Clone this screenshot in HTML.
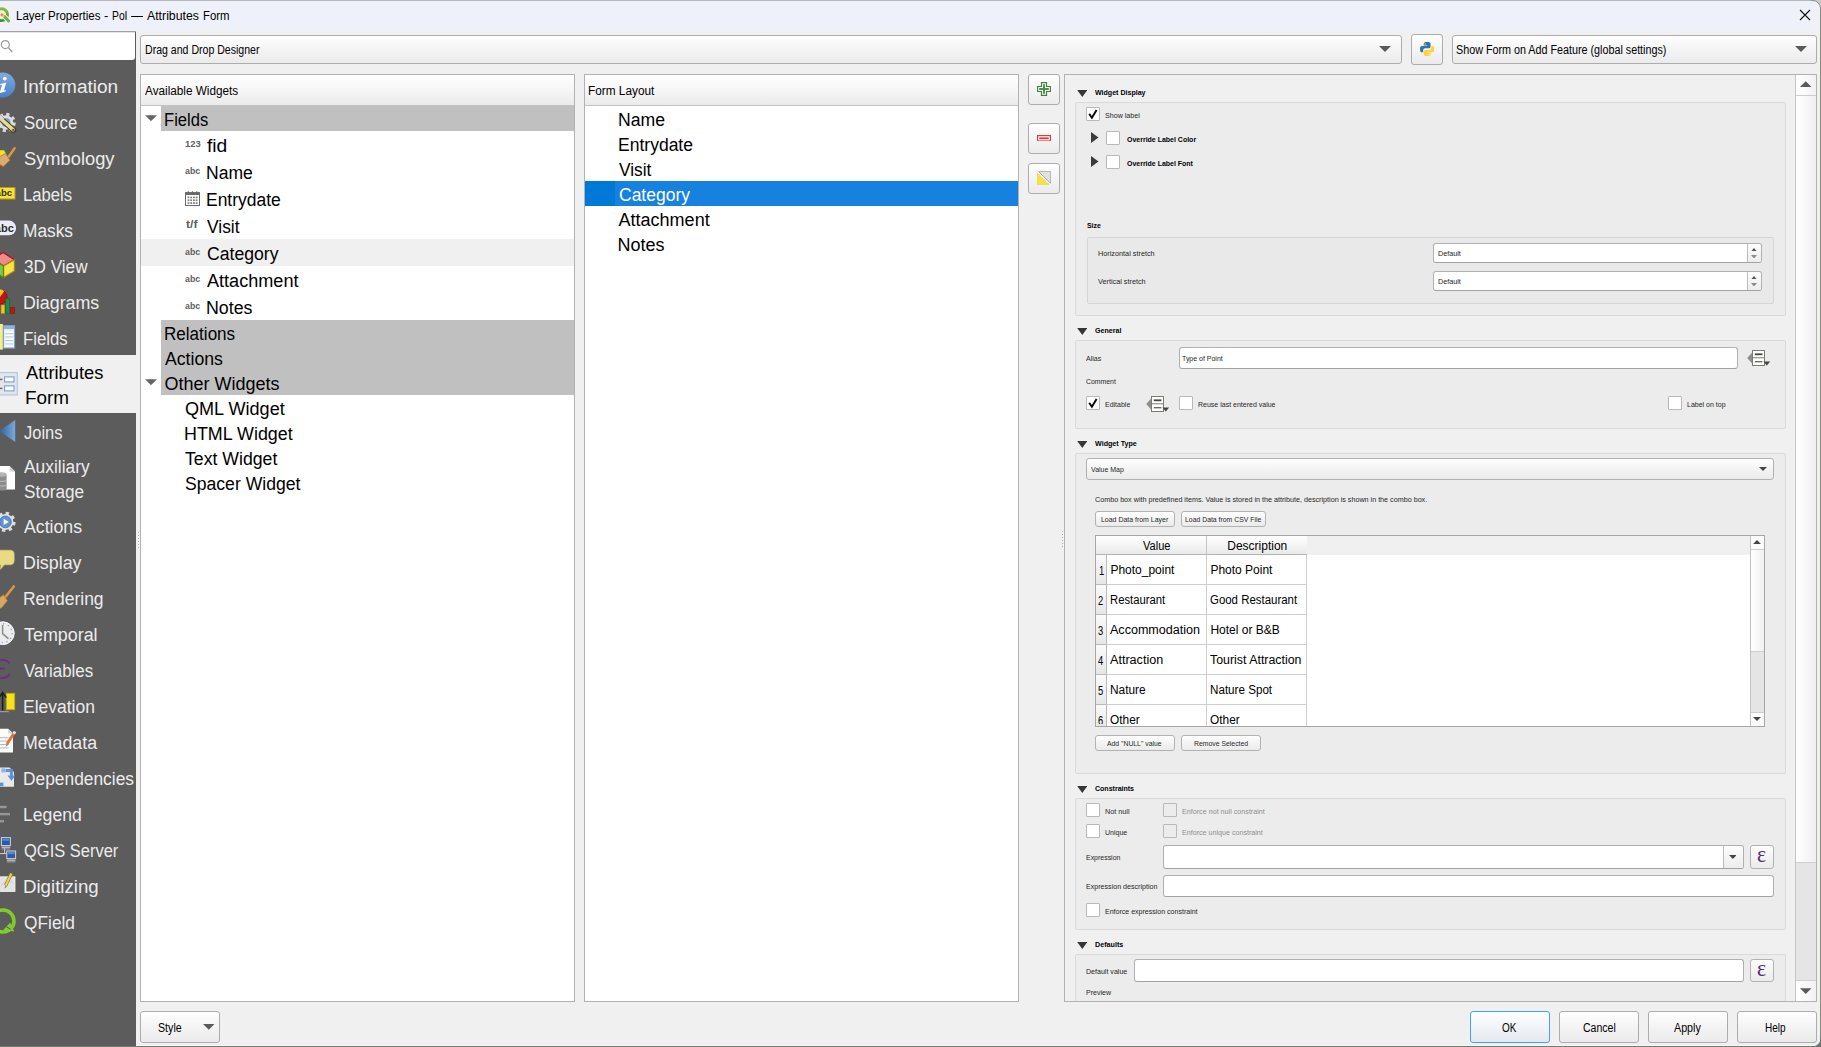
<!DOCTYPE html>
<html><head><meta charset="utf-8"><title>Layer Properties</title>
<style>
html,body{margin:0;padding:0}
body{width:1821px;height:1047px;overflow:hidden;position:relative;background:#f0f0f0;font-family:"Liberation Sans", sans-serif;font-size:12px}
div,span,svg{position:absolute;box-sizing:border-box}
span{white-space:pre}

</style></head>
<body>
<div style="left:0px;top:0px;width:1821px;height:31px;background:#eef1f9"></div>
<div style="left:0px;top:0px;width:1821px;height:1px;background:#b4b6bd"></div>
<span style="left:15.60px;top:9px;font-size:12px;line-height:14px;color:#000;transform:scaleX(0.9586);transform-origin:0 0;">Layer Properties</span>
<span style="left:103.80px;top:9px;font-size:12px;line-height:14px;color:#000;transform:scaleX(1.0750);transform-origin:0 0;">-</span>
<span style="left:111.90px;top:9px;font-size:12px;line-height:14px;color:#000;transform:scaleX(0.8598);transform-origin:0 0;">PoI</span>
<span style="left:131.15px;top:9px;font-size:12px;line-height:14px;color:#000;transform:scaleX(0.9958);transform-origin:0 0;">—</span>
<span style="left:146.80px;top:9px;font-size:12px;line-height:14px;color:#000;transform:scaleX(1.0249);transform-origin:0 0;">Attributes</span>
<span style="left:202.50px;top:9px;font-size:12px;line-height:14px;color:#000;transform:scaleX(0.9464);transform-origin:0 0;">Form</span>
<svg style="left:1799px;top:9px" width="12" height="12" viewBox="0 0 12 12"><path d="M1 1 L11 11 M11 1 L1 11" stroke="#111" stroke-width="1.1" fill="none"/></svg>
<svg style="left:0;top:5px" width="12" height="20" viewBox="0 5 12 20"><defs><linearGradient id="gq" x1="0" y1="0" x2="0" y2="1"><stop offset="0" stop-color="#8bbd2c"/><stop offset="1" stop-color="#3f962c"/></linearGradient></defs><circle cx="1.6" cy="14.7" r="5.9" fill="none" stroke="url(#gq)" stroke-width="2.9"/><path d="M4.6 16.6 L8.8 21.2" stroke="#eef1f9" stroke-width="5"/><path d="M4.4 16.4 L8.6 21" stroke="#6fb038" stroke-width="2.9" stroke-linecap="round"/><circle cx="2" cy="14.8" r="1.6" fill="#f28a1e"/><circle cx="3.6" cy="16" r="1.1" fill="#e8d45a"/></svg>
<div style="left:0px;top:31px;width:136px;height:1014px;background:#5c5c5c"></div>
<div style="left:0px;top:31px;width:135px;height:29px;background:#fff;border-bottom-right-radius:3px"></div>
<div style="left:0px;top:31px;width:136px;height:1px;background:#a2a2a2"></div>
<div style="left:0px;top:32px;width:135px;height:1px;background:#e4e4e4"></div>
<svg style="left:0;top:39px" width="14" height="14" viewBox="0 0 14 14"><circle cx="5.3" cy="5.6" r="4" fill="none" stroke="#9a9a9a" stroke-width="1.2"/><path d="M8.2 8.6 L12.3 13" stroke="#9a9a9a" stroke-width="1.4"/></svg>
<span style="left:22.54px;top:77px;font-size:18px;line-height:20px;color:#ececec;transform:scaleX(1.0564);transform-origin:0 0;">Information</span>
<span style="left:23.60px;top:113px;font-size:18px;line-height:20px;color:#ececec;transform:scaleX(0.9339);transform-origin:0 0;">Source</span>
<span style="left:23.60px;top:149px;font-size:18px;line-height:20px;color:#ececec;transform:scaleX(1.0164);transform-origin:0 0;">Symbology</span>
<span style="left:22.67px;top:185px;font-size:18px;line-height:20px;color:#ececec;transform:scaleX(0.9271);transform-origin:0 0;">Labels</span>
<span style="left:22.64px;top:221px;font-size:18px;line-height:20px;color:#ececec;transform:scaleX(0.9607);transform-origin:0 0;">Masks</span>
<span style="left:23.60px;top:257px;font-size:18px;line-height:20px;color:#ececec;transform:scaleX(0.9527);transform-origin:0 0;">3D View</span>
<span style="left:22.61px;top:293px;font-size:18px;line-height:20px;color:#ececec;transform:scaleX(0.9899);transform-origin:0 0;">Diagrams</span>
<span style="left:22.67px;top:329px;font-size:18px;line-height:20px;color:#ececec;transform:scaleX(0.9316);transform-origin:0 0;">Fields</span>
<span style="left:23.60px;top:423px;font-size:18px;line-height:20px;color:#ececec;transform:scaleX(0.9162);transform-origin:0 0;">Joins</span>
<span style="left:23.60px;top:517px;font-size:18px;line-height:20px;color:#ececec;transform:scaleX(0.9826);transform-origin:0 0;">Actions</span>
<span style="left:22.61px;top:553px;font-size:18px;line-height:20px;color:#ececec;transform:scaleX(0.9911);transform-origin:0 0;">Display</span>
<span style="left:22.63px;top:589px;font-size:18px;line-height:20px;color:#ececec;transform:scaleX(0.9698);transform-origin:0 0;">Rendering</span>
<span style="left:23.60px;top:625px;font-size:18px;line-height:20px;color:#ececec;transform:scaleX(0.9941);transform-origin:0 0;">Temporal</span>
<span style="left:23.60px;top:661px;font-size:18px;line-height:20px;color:#ececec;transform:scaleX(0.9389);transform-origin:0 0;">Variables</span>
<span style="left:22.63px;top:697px;font-size:18px;line-height:20px;color:#ececec;transform:scaleX(0.9717);transform-origin:0 0;">Elevation</span>
<span style="left:22.61px;top:733px;font-size:18px;line-height:20px;color:#ececec;transform:scaleX(0.9862);transform-origin:0 0;">Metadata</span>
<span style="left:22.64px;top:769px;font-size:18px;line-height:20px;color:#ececec;transform:scaleX(0.9642);transform-origin:0 0;">Dependencies</span>
<span style="left:22.62px;top:805px;font-size:18px;line-height:20px;color:#ececec;transform:scaleX(0.9784);transform-origin:0 0;">Legend</span>
<span style="left:23.60px;top:841px;font-size:18px;line-height:20px;color:#ececec;transform:scaleX(0.9153);transform-origin:0 0;">QGIS Server</span>
<span style="left:22.56px;top:877px;font-size:18px;line-height:20px;color:#ececec;transform:scaleX(1.0364);transform-origin:0 0;">Digitizing</span>
<span style="left:23.60px;top:913px;font-size:18px;line-height:20px;color:#ececec;transform:scaleX(0.9614);transform-origin:0 0;">QField</span>
<div style="left:0px;top:355px;width:136px;height:58px;background:#f0f0f0"></div>
<span style="left:26.15px;top:363px;font-size:18px;line-height:20px;color:#000;transform:scaleX(1.0180);transform-origin:0 0;">Attributes</span>
<span style="left:25.10px;top:388px;font-size:18px;line-height:20px;color:#000;transform:scaleX(1.0500);transform-origin:0 0;">Form</span>
<span style="left:23.60px;top:457px;font-size:18px;line-height:20px;color:#ececec;transform:scaleX(0.9644);transform-origin:0 0;">Auxiliary</span>
<span style="left:23.60px;top:482px;font-size:18px;line-height:20px;color:#ececec;transform:scaleX(0.9519);transform-origin:0 0;">Storage</span>
<svg style="left:0;top:60px;overflow:hidden" width="24" height="985" viewBox="0 60 24 985"><defs><linearGradient id="gi" x1="0" y1="0" x2="0" y2="1"><stop offset="0" stop-color="#7fabe2"/><stop offset="1" stop-color="#4c80c6"/></linearGradient><linearGradient id="gj" x1="0" y1="0" x2="1" y2="0"><stop offset="0" stop-color="#2f639c"/><stop offset="1" stop-color="#7aa8da"/></linearGradient></defs><circle cx="2.8" cy="85" r="12.5" fill="url(#gi)"/><circle cx="4.8" cy="78.6" r="1.9" fill="#fff"/><path d="M0.4 83.9 L6.3 82.6 L3.9 90.6 L5.9 90.2 L5.6 91.6 L-0.5 93 L2.1 85 L0.2 85.3 Z" fill="#fff"/><circle cx="6" cy="122.5" r="8.2" fill="none" stroke="#d9d9d9" stroke-width="3" stroke-dasharray="3.2 3.24"/><circle cx="6" cy="122.5" r="7.2" fill="#dedede"/><circle cx="6" cy="122.5" r="4.6" fill="#6f9fd8"/><path d="M0 118 L13.4 130" stroke="#3b3a2c" stroke-width="5.6" stroke-linecap="round"/><path d="M0 118 L13 129.7" stroke="#eedc7c" stroke-width="3.6" stroke-linecap="round"/><circle cx="13.2" cy="129.9" r="1.1" fill="#55513a"/><path d="M-1 115.5 L3.5 119.5" stroke="#d8d8d8" stroke-width="3"/><path d="M-1 150.3 L4 150.3 L6 153.6 L-1 157.5 Z" fill="#f6e21e"/><path d="M-1 163 L2.4 166 L-1 167.4 Z" fill="#e02424"/><path d="M14.6 148.2 L8 157.6" stroke="#dd9a3a" stroke-width="2.5" stroke-linecap="round"/><path d="M-2 157.6 L5.6 153.4 L10 160.2 L3.2 166.6 L-2 163.4 Z" fill="#d9ab72" stroke="#a8783a" stroke-width="0.8"/><rect x="-6" y="187.5" width="21" height="11.5" fill="#f7e03c" stroke="#b79b10" stroke-width="1"/><text x="-4.4" y="196.3" font-family="Liberation Sans" font-weight="700" font-size="9.6" fill="#3a3310">abc</text><rect x="-8" y="220.6" width="24" height="14.6" rx="7" fill="#ececf6"/><text x="-5.2" y="232.3" font-family="Liberation Sans" font-weight="700" font-size="11" fill="#2c2c2c">abc</text><path d="M3 252.4 L14.4 259.8 L3.5 266 L-7 259.4 Z" fill="#f08a8a" stroke="#a51414" stroke-width="1.2" stroke-linejoin="round"/><path d="M3.5 266 L14.4 259.8 L14.4 271 L3.5 277.6 Z" fill="#f7e346" stroke="#a08c0a" stroke-width="1.2" stroke-linejoin="round"/><path d="M-7 259.4 L3.5 266 L3.5 277.6 L-7 271 Z" fill="#86c644" stroke="#4a8a1a" stroke-width="1.2" stroke-linejoin="round"/><circle cx="0" cy="297" r="7.2" fill="#c31414" stroke="#8a0c0c" stroke-width="0.8"/><path d="M0 297 L-7 293 A7.2 7.2 0 0 1 4.2 291.2 Z" fill="#f8c622"/><rect x="1.1" y="305" width="3.6" height="8.4" fill="#f8c622" stroke="#c08a10" stroke-width="0.6"/><rect x="5.8" y="298.8" width="3.8" height="14.6" fill="#16904a" stroke="#0c6a34" stroke-width="0.6"/><rect x="10.4" y="307.4" width="3.9" height="6" fill="#c31414" stroke="#8a0c0c" stroke-width="0.6"/><rect x="-1" y="324" width="3.9" height="25.6" fill="#f6ee86"/><rect x="3.4" y="325.5" width="11.2" height="22.6" fill="#e6eef8" stroke="#7a9fcb" stroke-width="1"/><rect x="3.9" y="326" width="10.2" height="3" fill="#8fb3dd"/><rect x="5.2" y="331.5" width="7.8" height="1.5" fill="#fff"/><rect x="5.2" y="333.0" width="7.8" height="0.7" fill="#a9c2e2"/><rect x="5.2" y="335" width="7.8" height="1.5" fill="#fff"/><rect x="5.2" y="336.5" width="7.8" height="0.7" fill="#a9c2e2"/><rect x="5.2" y="338.5" width="7.8" height="1.5" fill="#fff"/><rect x="5.2" y="340.0" width="7.8" height="0.7" fill="#a9c2e2"/><rect x="5.2" y="342" width="7.8" height="1.5" fill="#fff"/><rect x="5.2" y="343.5" width="7.8" height="0.7" fill="#a9c2e2"/><rect x="5.2" y="345.5" width="7.8" height="1.5" fill="#fff"/><rect x="5.2" y="347.0" width="7.8" height="0.7" fill="#a9c2e2"/><rect x="-5" y="372.6" width="22.2" height="22.4" fill="#e3e5ea" stroke="#a9c1e1" stroke-width="1"/><rect x="4.6" y="376.9" width="9.4" height="5" fill="#fff" stroke="#6a9ad4" stroke-width="1"/><rect x="4.6" y="385.9" width="9.4" height="5" fill="#fff" stroke="#6a9ad4" stroke-width="1"/><rect x="-1" y="378.7" width="3.4" height="1.4" fill="#5a6c8e"/><rect x="-1" y="387.7" width="3.4" height="1.4" fill="#5a6c8e"/><path d="M-0.6 431 L15.2 420 L15.2 442 Z" fill="url(#gj)"/><path d="M-2 466 L9.6 466 L15 471.4 L15 489.6 L-2 489.6 Z" fill="#fdfdfd"/><path d="M9.6 466 L9.6 471.4 L15 471.4 Z" fill="#cfcfcf"/><path d="M-4 474.5 L6.6 474.5 L6.6 488.4 A5.3 2.2 0 0 1 -4 488.4 Z" fill="#8c8c8c"/><ellipse cx="1.3" cy="474.5" rx="5.3" ry="2.2" fill="#b4b4b4"/><path d="M-4 479.2 A5.3 2.2 0 0 0 6.6 479.2 M-4 483.8 A5.3 2.2 0 0 0 6.6 483.8" fill="none" stroke="#c4c4c4" stroke-width="0.9"/><circle cx="5.4" cy="521.9" r="8.6" fill="none" stroke="#dcdcdc" stroke-width="3.2" stroke-dasharray="3.3 3.45"/><circle cx="5.4" cy="521.9" r="8" fill="#e2e2e2"/><circle cx="5.4" cy="521.9" r="5.9" fill="#5f92d4" stroke="#3d6fb0" stroke-width="0.8"/><path d="M3.6 518.8 L8.8 521.9 L3.6 525 Z" fill="#fff"/><path d="M-6 550.2 L10 550.2 Q14.2 550.2 14.2 554.4 L14.2 560.6 Q14.2 564.8 10 564.8 L4.4 564.8 L0.4 569.4 L0.8 564.8 L-6 564.8 Z" fill="#eadb82" stroke="#d9c765" stroke-width="0.6"/><path d="M13.8 586.4 L5.8 596.6" stroke="#dd9a3a" stroke-width="2.5" stroke-linecap="round"/><path d="M-2 598.8 L3.6 594.8 L7.4 600.8 L1 608.4 L-2 606.8 Z" fill="#d9a860" stroke="#b07c34" stroke-width="0.8"/><circle cx="2.8" cy="633.2" r="11.4" fill="#ececec" stroke="#fafafa" stroke-width="1"/><circle cx="2.8" cy="633.2" r="9.4" fill="none" stroke="#6a98d4" stroke-width="1.3" stroke-dasharray="1.1 3.82"/><path d="M2.6 625.4 L2.6 633.6 L8 638.4" fill="none" stroke="#8a8a8a" stroke-width="1.5" stroke-linecap="round" stroke-linejoin="round"/><path d="M9 663 C6.5 658.6 -3.5 658.8 -3.5 664 C-3.5 667.4 0 668.6 4 668.6 M4 668.6 C-2 668.6 -6 670.4 -6 673.8 C-6 679.6 6.5 679.2 9.6 674.6" fill="none" stroke="#6c2f7e" stroke-width="1.7" stroke-linecap="round"/><rect x="6.3" y="693.3" width="8.4" height="16.4" fill="#f6e11e" stroke="#bfa80c" stroke-width="0.9"/><path d="M2.6 693.6 L2.6 710.6" stroke="#1c1c1c" stroke-width="1.5"/><path d="M-1 697.6 L2.6 692.6 L6.2 697.6" fill="none" stroke="#1c1c1c" stroke-width="1.5"/><path d="M-1 711.6 L8.8 711.6" stroke="#9a9a9a" stroke-width="1.3"/><path d="M-2 728.8 L8.2 728.8 L13 733.6 L13 752.4 L-2 752.4 Z" fill="#fbfbfb"/><path d="M8.2 728.8 L8.2 733.6 L13 733.6 Z" fill="#d4d4d4"/><rect x="-1" y="737.2" width="9.6" height="1" fill="#b9b9b9"/><rect x="-1" y="740.6" width="9.6" height="1" fill="#b9b9b9"/><rect x="-1" y="744" width="9.6" height="1" fill="#b9b9b9"/><rect x="-1" y="747.4" width="9.6" height="1" fill="#b9b9b9"/><path d="M14.4 732.6 L7 744" stroke="#e8722a" stroke-width="2.8"/><path d="M7 744 L5.4 746.8 L8.2 745" fill="#6a6a6a"/><path d="M15 731.6 L13.7 733.7" stroke="#e6e6e6" stroke-width="2.8"/><path d="M-2 767.6 L9.4 767.6 L14 772.2 L14 786.8 L-2 786.8 Z" fill="#e9e9e9"/><path d="M9.4 767.6 L9.4 772.2 L14 772.2 Z" fill="#c9c9c9"/><path d="M5.6 770.4 L11.4 770.4 L11.4 776" fill="none" stroke="#5b92de" stroke-width="3"/><path d="M7.6 775.6 L15.2 775.6 L11.4 781 Z" fill="#5b92de"/><rect x="-1" y="782.6" width="4.4" height="3.6" fill="#5b92de"/><rect x="1.4" y="768.4" width="4" height="4" fill="#8ab4ea"/><rect x="-1" y="805.8" width="7.6" height="2.4" fill="#979797"/><rect x="-1" y="812.9" width="11" height="2.4" fill="#979797"/><rect x="-1" y="820" width="5" height="2.4" fill="#979797"/><path d="M4.6 848 L4.6 853.6 M-1 853.6 L7.4 853.6" fill="none" stroke="#d0d0d0" stroke-width="1"/><rect x="1.4" y="837.6" width="9" height="8" fill="#2b59ac" stroke="#cfd3d8" stroke-width="1"/><rect x="2.4" y="838.6" width="7" height="2.2" fill="#5b86d0"/><rect x="1.6" y="846.6" width="8.6" height="1.2" fill="#cdcdcd"/><rect x="1.6" y="848.4" width="8.6" height="1" fill="#a9a9a9"/><rect x="6.8" y="851" width="8.8" height="7.6" fill="#2b59ac" stroke="#cfd3d8" stroke-width="1"/><rect x="7.8" y="852" width="6.8" height="2.2" fill="#5b86d0"/><rect x="7" y="859.6" width="8.4" height="1.2" fill="#cdcdcd"/><rect x="7" y="861.4" width="8.4" height="1" fill="#a9a9a9"/><rect x="-2" y="876.8" width="17" height="14.8" fill="#e3e3e3" stroke="#f2f2f2" stroke-width="0.8"/><path d="M1 886 L4.4 882 L7 884.6 L10 880.4 L12.6 883" fill="none" stroke="#c8c8c8" stroke-width="0.9"/><path d="M11.4 873.6 L5.6 885.6" stroke="#8a7a20" stroke-width="3.4"/><path d="M11.4 873.6 L5.6 885.6" stroke="#ead04c" stroke-width="2.2"/><path d="M5.6 885.6 L4.2 888.8 L7 886.4" fill="#7a7a7a"/><circle cx="3" cy="921" r="11" fill="none" stroke="#80cc28" stroke-width="3.6"/><path d="M10.2 922.4 L14.2 931.6 L3.4 929.8 Z" fill="#80cc28"/><path d="M6.4 926.6 L10.6 929.4" stroke="#5c5c5c" stroke-width="1.1"/></svg>
<svg style="left:138px;top:532px" width="2" height="18" viewBox="0 0 2 18"><rect x="0" y="0" width="1" height="1" fill="#b2b2b2"/><rect x="1" y="1" width="1" height="1" fill="#fbfbfb"/><rect x="0" y="3" width="1" height="1" fill="#b2b2b2"/><rect x="1" y="4" width="1" height="1" fill="#fbfbfb"/><rect x="0" y="6" width="1" height="1" fill="#b2b2b2"/><rect x="1" y="7" width="1" height="1" fill="#fbfbfb"/><rect x="0" y="9" width="1" height="1" fill="#b2b2b2"/><rect x="1" y="10" width="1" height="1" fill="#fbfbfb"/><rect x="0" y="12" width="1" height="1" fill="#b2b2b2"/><rect x="1" y="13" width="1" height="1" fill="#fbfbfb"/><rect x="0" y="15" width="1" height="1" fill="#b2b2b2"/><rect x="1" y="16" width="1" height="1" fill="#fbfbfb"/></svg>
<svg style="left:1062px;top:531px" width="2" height="18" viewBox="0 0 2 18"><rect x="0" y="0" width="1" height="1" fill="#b2b2b2"/><rect x="1" y="1" width="1" height="1" fill="#fbfbfb"/><rect x="0" y="3" width="1" height="1" fill="#b2b2b2"/><rect x="1" y="4" width="1" height="1" fill="#fbfbfb"/><rect x="0" y="6" width="1" height="1" fill="#b2b2b2"/><rect x="1" y="7" width="1" height="1" fill="#fbfbfb"/><rect x="0" y="9" width="1" height="1" fill="#b2b2b2"/><rect x="1" y="10" width="1" height="1" fill="#fbfbfb"/><rect x="0" y="12" width="1" height="1" fill="#b2b2b2"/><rect x="1" y="13" width="1" height="1" fill="#fbfbfb"/><rect x="0" y="15" width="1" height="1" fill="#b2b2b2"/><rect x="1" y="16" width="1" height="1" fill="#fbfbfb"/></svg>
<div style="left:140px;top:35px;width:1262px;height:29px;border:1px solid #adadad;border-radius:3px;background:linear-gradient(#fefefe,#f3f3f3 55%,#ebebeb)"></div>
<span style="left:144.50px;top:43px;font-size:12px;line-height:14px;color:#000;transform:scaleX(0.8803);transform-origin:0 0;">Drag and Drop Designer</span>
<svg style="left:1379px;top:46px" width="12" height="6" viewBox="0 0 10 5"><path d="M0 0 L10 0 L5 5 Z" fill="#5a5a5a"/></svg>
<div style="left:1411px;top:34px;width:32px;height:31px;border:1px solid #adadad;border-radius:3px;background:linear-gradient(#fefefe,#f3f3f3 55%,#ebebeb)"></div>
<svg style="left:1419.8px;top:41.8px" width="14.4" height="14.4" viewBox="0 0 24 24"><path d="M11.9 0.2 C8 0.2 6.2 1.2 6.2 3.4 V6 h5.8 v0.8 H3.2 C1.2 6.8 0 8.6 0 12 c0 3.4 1.2 5.2 3.2 5.2 h2.1 v-3.1 c0-2 1.5-3.5 3.5-3.5 h5.8 c1.7 0 3-1.3 3-3 V3.4 C17.6 1.2 15.8 0.2 11.9 0.2 z" fill="#3571a3"/><circle cx="8.6" cy="3.2" r="1.1" fill="#dfe8f0"/><path d="M12.1 23.8 c3.9 0 5.7-1 5.7-3.2 V18 h-5.8 v-0.8 h8.8 c2 0 3.2-1.8 3.2-5.2 c0-3.4-1.2-5.2-3.2-5.2 h-2.1 v3.1 c0 2-1.5 3.5-3.5 3.5 H9.4 c-1.7 0-3 1.3-3 3 v4.2 c0 2.2 1.8 3.2 5.7 3.2 z" fill="#ffd43b"/><circle cx="15.4" cy="20.8" r="1.1" fill="#fff3c0"/></svg>
<div style="left:1452px;top:35px;width:365px;height:29px;border:1px solid #adadad;border-radius:3px;background:linear-gradient(#fefefe,#f3f3f3 55%,#ebebeb)"></div>
<span style="left:1456.20px;top:43px;font-size:12px;line-height:14px;color:#000;transform:scaleX(0.8962);transform-origin:0 0;">Show Form on Add Feature (global settings)</span>
<svg style="left:1794.5px;top:46px" width="12" height="6" viewBox="0 0 10 5"><path d="M0 0 L10 0 L5 5 Z" fill="#5a5a5a"/></svg>
<div style="left:140px;top:74px;width:435px;height:928px;background:#fff;border:1px solid #b2b2b2"></div>
<div style="left:141px;top:75px;width:433px;height:31px;background:linear-gradient(#ffffff,#f7f7f7 45%,#ebebeb);border-bottom:1px solid #c2c2c2"></div>
<span style="left:144.50px;top:84px;font-size:12px;line-height:14px;color:#000;transform:scaleX(0.9794);transform-origin:0 0;">Available Widgets</span>
<div style="left:584px;top:74px;width:435px;height:928px;background:#fff;border:1px solid #b2b2b2"></div>
<div style="left:585px;top:75px;width:433px;height:31px;background:linear-gradient(#ffffff,#f7f7f7 45%,#ebebeb);border-bottom:1px solid #c2c2c2"></div>
<span style="left:588.00px;top:84px;font-size:12px;line-height:14px;color:#000;transform:scaleX(0.9849);transform-origin:0 0;">Form Layout</span>
<div style="left:161px;top:106px;width:413px;height:25px;background:#c0c0c0"></div>
<div style="left:141px;top:239px;width:433px;height:27px;background:#f0f0f0"></div>
<div style="left:161px;top:320px;width:413px;height:75px;background:#c0c0c0"></div>
<svg style="left:145px;top:114.8px" width="12" height="6.3" viewBox="0 0 12 6"><path d="M0 0 L12 0 L6 6 Z" fill="#646464"/></svg>
<svg style="left:145px;top:378.9px" width="12" height="6.3" viewBox="0 0 12 6"><path d="M0 0 L12 0 L6 6 Z" fill="#646464"/></svg>
<span style="left:164.18px;top:110px;font-size:18px;line-height:20px;color:#000;transform:scaleX(0.9210);transform-origin:0 0;">Fields</span>
<span style="left:207.00px;top:136px;font-size:18px;line-height:20px;color:#000;transform:scaleX(1.0694);transform-origin:0 0;">fid</span>
<span style="left:206.03px;top:163px;font-size:18px;line-height:20px;color:#000;transform:scaleX(0.9733);transform-origin:0 0;">Name</span>
<span style="left:206.03px;top:190px;font-size:18px;line-height:20px;color:#000;transform:scaleX(0.9700);transform-origin:0 0;">Entrydate</span>
<span style="left:206.50px;top:217px;font-size:18px;line-height:20px;color:#000;transform:scaleX(0.9650);transform-origin:0 0;">Visit</span>
<span style="left:206.50px;top:244px;font-size:18px;line-height:20px;color:#000;transform:scaleX(0.9790);transform-origin:0 0;">Category</span>
<span style="left:206.50px;top:271px;font-size:18px;line-height:20px;color:#000;transform:scaleX(1.0050);transform-origin:0 0;">Attachment</span>
<span style="left:206.01px;top:298px;font-size:18px;line-height:20px;color:#000;transform:scaleX(0.9887);transform-origin:0 0;">Notes</span>
<span style="left:163.55px;top:324px;font-size:18px;line-height:20px;color:#000;transform:scaleX(0.9481);transform-origin:0 0;">Relations</span>
<span style="left:164.50px;top:349px;font-size:18px;line-height:20px;color:#000;transform:scaleX(0.9792);transform-origin:0 0;">Actions</span>
<span style="left:164.50px;top:374px;font-size:18px;line-height:20px;color:#000;">Other Widgets</span>
<span style="left:184.50px;top:399px;font-size:18px;line-height:20px;color:#000;transform:scaleX(1.0037);transform-origin:0 0;">QML Widget</span>
<span style="left:183.51px;top:424px;font-size:18px;line-height:20px;color:#000;transform:scaleX(0.9943);transform-origin:0 0;">HTML Widget</span>
<span style="left:184.50px;top:449px;font-size:18px;line-height:20px;color:#000;transform:scaleX(0.9816);transform-origin:0 0;">Text Widget</span>
<span style="left:184.50px;top:474px;font-size:18px;line-height:20px;color:#000;transform:scaleX(0.9775);transform-origin:0 0;">Spacer Widget</span>
<span style="left:184.70px;top:139px;font-size:9px;line-height:10px;font-weight:700;color:#5e5e5e;transform:scaleX(1.0393);transform-origin:0 0;">123</span>
<span style="left:184.70px;top:166px;font-size:9px;line-height:10px;font-weight:700;color:#5e5e5e;transform:scaleX(0.9740);transform-origin:0 0;">abc</span>
<span style="left:184.70px;top:247px;font-size:9px;line-height:10px;font-weight:700;color:#5e5e5e;transform:scaleX(0.9740);transform-origin:0 0;">abc</span>
<span style="left:184.70px;top:274px;font-size:9px;line-height:10px;font-weight:700;color:#5e5e5e;transform:scaleX(0.9740);transform-origin:0 0;">abc</span>
<span style="left:184.70px;top:301px;font-size:9px;line-height:10px;font-weight:700;color:#5e5e5e;transform:scaleX(0.9740);transform-origin:0 0;">abc</span>
<span style="left:186.20px;top:218px;font-size:10.5px;line-height:12px;font-weight:700;color:#5e5e5e;transform:scaleX(1.1619);transform-origin:0 0;">t/f</span>
<svg style="left:184.5px;top:190.5px" width="15" height="15" viewBox="0 0 15 15"><rect x="0.5" y="1.6" width="14" height="12.9" fill="#fff" stroke="#6a6a6a" stroke-width="1"/><rect x="0.5" y="1.6" width="14" height="2.4" fill="#6a6a6a"/><path d="M3.2 0.2 v2 M7.5 0.2 v2 M11.8 0.2 v2" stroke="#6a6a6a" stroke-width="1.2"/><rect x="2.6" y="5.6" width="1.8" height="1.7" fill="#7c7c7c"/><rect x="2.6" y="8.399999999999999" width="1.8" height="1.7" fill="#7c7c7c"/><rect x="2.6" y="11.2" width="1.8" height="1.7" fill="#7c7c7c"/><rect x="5.300000000000001" y="5.6" width="1.8" height="1.7" fill="#7c7c7c"/><rect x="5.300000000000001" y="8.399999999999999" width="1.8" height="1.7" fill="#7c7c7c"/><rect x="5.300000000000001" y="11.2" width="1.8" height="1.7" fill="#7c7c7c"/><rect x="8.0" y="5.6" width="1.8" height="1.7" fill="#7c7c7c"/><rect x="8.0" y="8.399999999999999" width="1.8" height="1.7" fill="#7c7c7c"/><rect x="8.0" y="11.2" width="1.8" height="1.7" fill="#7c7c7c"/><rect x="10.700000000000001" y="5.6" width="1.8" height="1.7" fill="#7c7c7c"/><rect x="10.700000000000001" y="8.399999999999999" width="1.8" height="1.7" fill="#7c7c7c"/><rect x="10.700000000000001" y="11.2" width="1.8" height="1.7" fill="#7c7c7c"/></svg>
<div style="left:585px;top:181px;width:433px;height:25px;background:#1681de"></div>
<div style="left:585px;top:181px;width:30px;height:25px;background:#0078d7"></div>
<span style="left:617.62px;top:110px;font-size:18px;line-height:20px;color:#000;transform:scaleX(0.9786);transform-origin:0 0;">Name</span>
<span style="left:617.63px;top:135px;font-size:18px;line-height:20px;color:#000;transform:scaleX(0.9732);transform-origin:0 0;">Entrydate</span>
<span style="left:618.60px;top:160px;font-size:18px;line-height:20px;color:#000;transform:scaleX(0.9620);transform-origin:0 0;">Visit</span>
<span style="left:618.60px;top:185px;font-size:18px;line-height:20px;color:#fff;transform:scaleX(0.9721);transform-origin:0 0;">Category</span>
<span style="left:618.60px;top:210px;font-size:18px;line-height:20px;color:#000;">Attachment</span>
<span style="left:617.60px;top:235px;font-size:18px;line-height:20px;color:#000;">Notes</span>
<div style="left:1028px;top:74px;width:32px;height:31px;border:1px solid #adadad;border-radius:3px;background:linear-gradient(#fefefe,#f3f3f3 55%,#ebebeb)"></div>
<div style="left:1028px;top:123px;width:32px;height:31px;border:1px solid #adadad;border-radius:3px;background:linear-gradient(#fefefe,#f3f3f3 55%,#ebebeb)"></div>
<div style="left:1028px;top:163px;width:32px;height:31px;border:1px solid #adadad;border-radius:3px;background:linear-gradient(#fefefe,#f3f3f3 55%,#ebebeb)"></div>
<svg style="left:1037px;top:82px" width="14" height="14" viewBox="0 0 14 14"><path d="M4.5 0.6 h5 v3.9 h3.9 v5 h-3.9 v3.9 h-5 v-3.9 h-3.9 v-5 h3.9 z" fill="#fff" stroke="#3f8340" stroke-width="1.2"/><path d="M6 2.2 h2 v3.8 h3.8 v2 h-3.8 v3.8 h-2 v-3.8 h-3.8 v-2 h3.8 z" fill="#4c8f4c"/></svg><svg style="left:1037px;top:134.6px" width="14" height="6.6" viewBox="0 0 14 6.6"><rect x="0.6" y="0.6" width="12.8" height="5.4" fill="#fff" stroke="#e23a3a" stroke-width="1.2"/><rect x="2.3" y="2.4" width="9.4" height="1.8" fill="#e23a3a"/></svg><svg style="left:1037px;top:171px" width="14" height="14" viewBox="0 0 14 14"><rect x="1.6" y="0.5" width="11.9" height="11.9" fill="#e2e2e2" stroke="#b9b9b9" stroke-width="1"/><path d="M0.2 1.4 L0.2 13.8 L12.2 13.8 Z" fill="#f7e244" stroke="#e2cc34" stroke-width="0.5"/><path d="M0.6 0.8 L13.4 13.2" stroke="#fff" stroke-width="1.6"/><path d="M1.6 0.6 L13.6 12.4" stroke="#8a8a8a" stroke-width="0.7"/></svg>
<div style="left:140px;top:1011px;width:80px;height:32px;border:1px solid #adadad;border-radius:3px;background:linear-gradient(#fefefe,#f3f3f3 55%,#ebebeb)"></div>
<span style="left:158.25px;top:1021px;font-size:12px;line-height:14px;color:#000;transform:scaleX(0.8888);transform-origin:0 0;">Style</span>
<svg style="left:203.3px;top:1024.2px" width="11.5" height="5.8" viewBox="0 0 10 5"><path d="M0 0 L10 0 L5 5 Z" fill="#5a5a5a"/></svg>
<div style="left:1470px;top:1011px;width:80px;height:32px;border:1px solid #43a2f3;border-radius:3px;background:linear-gradient(#fdfeff,#f1f4f8 50%,#e4e9ee)"></div>
<div style="left:1559px;top:1011px;width:80px;height:32px;border:1px solid #adadad;border-radius:3px;background:linear-gradient(#fefefe,#f3f3f3 55%,#ebebeb)"></div>
<div style="left:1648px;top:1011px;width:80px;height:32px;border:1px solid #adadad;border-radius:3px;background:linear-gradient(#fefefe,#f3f3f3 55%,#ebebeb)"></div>
<div style="left:1737px;top:1011px;width:80px;height:32px;border:1px solid #adadad;border-radius:3px;background:linear-gradient(#fefefe,#f3f3f3 55%,#ebebeb)"></div>
<span style="left:1502.40px;top:1021px;font-size:12px;line-height:14px;color:#000;transform:scaleX(0.8250);transform-origin:0 0;">OK</span>
<span style="left:1582.50px;top:1021px;font-size:12px;line-height:14px;color:#000;transform:scaleX(0.8777);transform-origin:0 0;">Cancel</span>
<span style="left:1673.70px;top:1021px;font-size:12px;line-height:14px;color:#000;transform:scaleX(0.8928);transform-origin:0 0;">Apply</span>
<span style="left:1765.40px;top:1021px;font-size:12px;line-height:14px;color:#000;transform:scaleX(0.8318);transform-origin:0 0;">Help</span>
<div style="left:1064px;top:74px;width:753px;height:928px;background:#f0f0f0;border:1px solid #b2b2b2"></div>
<div style="left:1795px;top:75px;width:21px;height:926px;background:linear-gradient(90deg,#ffffff,#fafafa 35%,#f0f0f0);border-left:1px solid #c6c6c6"></div>
<div style="left:1795px;top:75px;width:21px;height:21px;background:linear-gradient(90deg,#ffffff,#fbfbfb 40%,#f1f1f1);border-left:1px solid #c6c6c6;border-bottom:1px solid #cdcdcd"></div>
<div style="left:1796px;top:862px;width:20px;height:119px;background:#e5e5e5;border-top:1px solid #cfcfcf;border-bottom:1px solid #cfcfcf"></div>
<div style="left:1796px;top:981px;width:20px;height:20px;background:linear-gradient(90deg,#ffffff,#fbfbfb 40%,#f1f1f1)"></div>
<svg style="left:1800px;top:81.2px" width="11.5" height="6" viewBox="0 0 10 5"><path d="M0 5 L10 5 L5 0 Z" fill="#5a5a5a"/></svg>
<svg style="left:1800px;top:988px" width="11.5" height="6" viewBox="0 0 10 5"><path d="M0 0 L10 0 L5 5 Z" fill="#5a5a5a"/></svg>
<svg style="left:1076.6px;top:90px" width="10.6" height="7" viewBox="0 0 11 7.5"><path d="M0 0 L11 0 L5.5 7.5 Z" fill="#363636"/></svg>
<span style="left:1095.00px;top:88px;font-size:8px;line-height:9px;font-weight:700;color:#000;transform:scaleX(0.8820);transform-origin:0 0;">Widget Display</span>
<div style="left:1075px;top:102px;width:711px;height:214px;background:#ececec;border:1px solid #dadada;border-radius:2px"></div>
<div style="left:1086px;top:107px;width:14px;height:14px;background:#fff;border:1px solid #b9b9b9;border-radius:1px"><svg style="left:0;top:0" width="12" height="12" viewBox="0 0 12 12"><path d="M2.2 5.9 L4.9 9.7 L9.6 1.9" stroke="#0a0a0a" stroke-width="1.95" fill="none"/></svg></div>
<span style="left:1104.80px;top:111px;font-size:8px;line-height:9px;color:#262626;transform:scaleX(0.8892);transform-origin:0 0;">Show label</span>
<svg style="left:1091px;top:131.6px" width="7.5" height="11" viewBox="0 0 7.5 11"><path d="M0 0 L7.5 5.5 L0 11 Z" fill="#3a3a3a"/></svg>
<div style="left:1106px;top:131px;width:14px;height:14px;background:#fff;border:1px solid #b9b9b9;border-radius:1px"></div>
<span style="left:1126.80px;top:135px;font-size:8px;line-height:9px;font-weight:700;color:#000;transform:scaleX(0.8732);transform-origin:0 0;">Override Label Color</span>
<svg style="left:1091px;top:155.6px" width="7.5" height="11" viewBox="0 0 7.5 11"><path d="M0 0 L7.5 5.5 L0 11 Z" fill="#3a3a3a"/></svg>
<div style="left:1106px;top:155px;width:14px;height:14px;background:#fff;border:1px solid #b9b9b9;border-radius:1px"></div>
<span style="left:1126.80px;top:159px;font-size:8px;line-height:9px;font-weight:700;color:#000;transform:scaleX(0.8721);transform-origin:0 0;">Override Label Font</span>
<span style="left:1087.00px;top:221px;font-size:8px;line-height:9px;font-weight:700;color:#000;transform:scaleX(0.8606);transform-origin:0 0;">Size</span>
<div style="left:1087px;top:237px;width:687px;height:67px;background:#e9e9e9;border:1px solid #d6d6d6;border-radius:2px"></div>
<span style="left:1097.75px;top:249px;font-size:8px;line-height:9px;color:#262626;transform:scaleX(0.9102);transform-origin:0 0;">Horizontal stretch</span>
<span style="left:1097.75px;top:277px;font-size:8px;line-height:9px;color:#262626;transform:scaleX(0.9084);transform-origin:0 0;">Vertical stretch</span>
<div style="left:1433px;top:243px;width:329px;height:20px;background:#fff;border:1px solid #b0b0b0;border-radius:3px;border-bottom-color:#a2a2a2"></div>
<div style="left:1747px;top:244px;width:14px;height:18px;border-left:1px solid #bdbdbd;background:linear-gradient(#fdfdfd,#ededed);border-radius:0 2px 2px 0"></div>
<svg style="left:1751.3px;top:247.7px" width="6" height="3.5" viewBox="0 0 6 3.5"><path d="M0 3.5 L6 3.5 L3 0 Z" fill="#555"/></svg>
<svg style="left:1751.3px;top:254.7px" width="6" height="3.5" viewBox="0 0 6 3.5"><path d="M0 0 L6 0 L3 3.5 Z" fill="#8a8a8a"/></svg>
<span style="left:1438.00px;top:249px;font-size:8px;line-height:9px;color:#262626;transform:scaleX(0.8995);transform-origin:0 0;">Default</span>
<div style="left:1433px;top:271px;width:329px;height:20px;background:#fff;border:1px solid #b0b0b0;border-radius:3px;border-bottom-color:#a2a2a2"></div>
<div style="left:1747px;top:272px;width:14px;height:18px;border-left:1px solid #bdbdbd;background:linear-gradient(#fdfdfd,#ededed);border-radius:0 2px 2px 0"></div>
<svg style="left:1751.3px;top:275.7px" width="6" height="3.5" viewBox="0 0 6 3.5"><path d="M0 3.5 L6 3.5 L3 0 Z" fill="#555"/></svg>
<svg style="left:1751.3px;top:282.7px" width="6" height="3.5" viewBox="0 0 6 3.5"><path d="M0 0 L6 0 L3 3.5 Z" fill="#8a8a8a"/></svg>
<span style="left:1438.00px;top:277px;font-size:8px;line-height:9px;color:#262626;transform:scaleX(0.8995);transform-origin:0 0;">Default</span>
<svg style="left:1076.6px;top:328px" width="10.6" height="7" viewBox="0 0 11 7.5"><path d="M0 0 L11 0 L5.5 7.5 Z" fill="#363636"/></svg>
<span style="left:1095.00px;top:326px;font-size:8px;line-height:9px;font-weight:700;color:#000;transform:scaleX(0.8877);transform-origin:0 0;">General</span>
<div style="left:1075px;top:340px;width:711px;height:89px;background:#ececec;border:1px solid #dadada;border-radius:2px"></div>
<span style="left:1086.00px;top:354px;font-size:8px;line-height:9px;color:#262626;transform:scaleX(0.8795);transform-origin:0 0;">Alias</span>
<div style="left:1179px;top:347px;width:559px;height:22px;background:#fff;border:1px solid #b0b0b0;border-radius:3px;border-bottom-color:#a2a2a2"></div>
<span style="left:1182.00px;top:354px;font-size:8px;line-height:9px;color:#262626;transform:scaleX(0.8721);transform-origin:0 0;">Type of Point</span>
<span style="left:1086.00px;top:377px;font-size:8px;line-height:9px;color:#262626;transform:scaleX(0.8603);transform-origin:0 0;">Comment</span>
<div style="left:1086px;top:396px;width:14px;height:14px;background:#fff;border:1px solid #b9b9b9;border-radius:1px"><svg style="left:0;top:0" width="12" height="12" viewBox="0 0 12 12"><path d="M2.2 5.9 L4.9 9.7 L9.6 1.9" stroke="#0a0a0a" stroke-width="1.95" fill="none"/></svg></div>
<span style="left:1105.00px;top:400px;font-size:8px;line-height:9px;color:#262626;transform:scaleX(0.8740);transform-origin:0 0;">Editable</span>
<div style="left:1179px;top:396px;width:14px;height:14px;background:#fff;border:1px solid #b9b9b9;border-radius:1px"></div>
<span style="left:1198.00px;top:400px;font-size:8px;line-height:9px;color:#262626;transform:scaleX(0.8759);transform-origin:0 0;">Reuse last entered value</span>
<div style="left:1668px;top:396px;width:14px;height:14px;background:#fff;border:1px solid #b9b9b9;border-radius:1px"></div>
<span style="left:1687.00px;top:400px;font-size:8px;line-height:9px;color:#262626;transform:scaleX(0.8746);transform-origin:0 0;">Label on top</span>
<svg style="left:1747px;top:349.5px" width="24" height="17" viewBox="0 0 24 17"><path d="M0.2 8 L5.4 2.2 L5.4 13.8 Z" fill="#8e8e8e"/><rect x="5.5" y="0.5" width="12" height="15" fill="#fff" stroke="#7c7c70" stroke-width="1"/><path d="M5.5 7.8 H17.5" stroke="#7c7c70" stroke-width="1"/><rect x="7.8" y="3.4" width="7.6" height="1.8" fill="#454545"/><rect x="7.8" y="11.2" width="7.6" height="1.1" fill="#454545"/><path d="M16.4 11.6 L23.2 11.6 L19.8 15.6 Z" fill="#454545"/></svg><svg style="left:1146px;top:396px" width="24" height="17" viewBox="0 0 24 17"><path d="M0.2 8 L5.4 2.2 L5.4 13.8 Z" fill="#8e8e8e"/><rect x="5.5" y="0.5" width="12" height="15" fill="#fff" stroke="#7c7c70" stroke-width="1"/><path d="M5.5 7.8 H17.5" stroke="#7c7c70" stroke-width="1"/><rect x="7.8" y="3.4" width="7.6" height="1.8" fill="#454545"/><rect x="7.8" y="11.2" width="7.6" height="1.1" fill="#454545"/><path d="M16.4 11.6 L23.2 11.6 L19.8 15.6 Z" fill="#454545"/></svg>
<svg style="left:1076.6px;top:441px" width="10.6" height="7" viewBox="0 0 11 7.5"><path d="M0 0 L11 0 L5.5 7.5 Z" fill="#363636"/></svg>
<span style="left:1095.00px;top:439px;font-size:8px;line-height:9px;font-weight:700;color:#000;transform:scaleX(0.8906);transform-origin:0 0;">Widget Type</span>
<div style="left:1075px;top:453px;width:711px;height:321px;background:#ececec;border:1px solid #dadada;border-radius:2px"></div>
<div style="left:1086px;top:458px;width:688px;height:22px;border:1px solid #b2b2b2;border-radius:3px;background:linear-gradient(#fefefe,#f3f3f3 55%,#ebebeb)"></div>
<span style="left:1090.75px;top:465px;font-size:8px;line-height:9px;color:#262626;transform:scaleX(0.8703);transform-origin:0 0;">Value Map</span>
<svg style="left:1758.7px;top:467px" width="8" height="4" viewBox="0 0 10 5"><path d="M0 0 L10 0 L5 5 Z" fill="#444"/></svg>
<span style="left:1095.00px;top:495px;font-size:8px;line-height:9px;color:#262626;transform:scaleX(0.8972);transform-origin:0 0;">Combo box with predefined items. Value is stored in the attribute, description is shown in the combo box.</span>
<div style="left:1095px;top:511px;width:80px;height:16px;border:1px solid #b2b2b2;border-radius:3px;background:linear-gradient(#fefefe,#f3f3f3 55%,#ebebeb)"></div>
<span style="left:1101.00px;top:515px;font-size:8px;line-height:9px;color:#262626;transform:scaleX(0.8686);transform-origin:0 0;">Load Data from Layer</span>
<div style="left:1181px;top:511px;width:85px;height:16px;border:1px solid #b2b2b2;border-radius:3px;background:linear-gradient(#fefefe,#f3f3f3 55%,#ebebeb)"></div>
<span style="left:1185.00px;top:515px;font-size:8px;line-height:9px;color:#262626;transform:scaleX(0.8578);transform-origin:0 0;">Load Data from CSV File</span>
<div style="left:1095px;top:535px;width:670px;height:192px;background:#fff;border:1px solid #a6a6a6"></div>
<div style="left:1096px;top:536px;width:654px;height:19px;background:#f0f0f0"></div>
<div style="left:1096px;top:536px;width:111px;height:19px;background:linear-gradient(#ffffff,#f5f5f5 50%,#e9e9e9);border-right:1px solid #c4c4c4;border-bottom:1px solid #b4b4b4"></div>
<div style="left:1207px;top:536px;width:100px;height:19px;background:linear-gradient(#ffffff,#f5f5f5 50%,#e9e9e9);border-bottom:1px solid #b4b4b4"></div>
<span style="left:1143.25px;top:539px;font-size:12px;line-height:14px;color:#000;transform:scaleX(0.9211);transform-origin:0 0;">Value</span>
<span style="left:1227.25px;top:539px;font-size:12px;line-height:14px;color:#000;">Description</span>
<div style="left:1096px;top:555px;width:11px;height:30px;background:linear-gradient(#fafafa,#f0f0f0 60%,#e6e6e6);border-right:1px solid #b9b9b9;border-bottom:1px solid #b9b9b9"></div>
<div style="left:1107px;top:555px;width:100px;height:30px;border-right:1px solid #cfcfcf;border-bottom:1px solid #cfcfcf"></div>
<div style="left:1207px;top:555px;width:100px;height:30px;border-right:1px solid #cfcfcf;border-bottom:1px solid #cfcfcf"></div>
<span style="left:1098.80px;top:564px;font-size:12px;line-height:14px;color:#000;transform:scaleX(0.7800);transform-origin:0 0;">1</span>
<span style="left:1110.40px;top:563px;font-size:12px;line-height:14px;color:#000;">Photo_point</span>
<span style="left:1210.40px;top:563px;font-size:12px;line-height:14px;color:#000;">Photo Point</span>
<div style="left:1096px;top:585px;width:11px;height:30px;background:linear-gradient(#fafafa,#f0f0f0 60%,#e6e6e6);border-right:1px solid #b9b9b9;border-bottom:1px solid #b9b9b9"></div>
<div style="left:1107px;top:585px;width:100px;height:30px;border-right:1px solid #cfcfcf;border-bottom:1px solid #cfcfcf"></div>
<div style="left:1207px;top:585px;width:100px;height:30px;border-right:1px solid #cfcfcf;border-bottom:1px solid #cfcfcf"></div>
<span style="left:1098.20px;top:594px;font-size:12px;line-height:14px;color:#000;transform:scaleX(0.7800);transform-origin:0 0;">2</span>
<span style="left:1110.40px;top:593px;font-size:12px;line-height:14px;color:#000;transform:scaleX(0.9391);transform-origin:0 0;">Restaurant</span>
<span style="left:1210.40px;top:593px;font-size:12px;line-height:14px;color:#000;transform:scaleX(0.9532);transform-origin:0 0;">Good Restaurant</span>
<div style="left:1096px;top:615px;width:11px;height:30px;background:linear-gradient(#fafafa,#f0f0f0 60%,#e6e6e6);border-right:1px solid #b9b9b9;border-bottom:1px solid #b9b9b9"></div>
<div style="left:1107px;top:615px;width:100px;height:30px;border-right:1px solid #cfcfcf;border-bottom:1px solid #cfcfcf"></div>
<div style="left:1207px;top:615px;width:100px;height:30px;border-right:1px solid #cfcfcf;border-bottom:1px solid #cfcfcf"></div>
<span style="left:1098.20px;top:624px;font-size:12px;line-height:14px;color:#000;transform:scaleX(0.7800);transform-origin:0 0;">3</span>
<span style="left:1110.40px;top:623px;font-size:12px;line-height:14px;color:#000;transform:scaleX(1.0455);transform-origin:0 0;">Accommodation</span>
<span style="left:1210.40px;top:623px;font-size:12px;line-height:14px;color:#000;">Hotel or B&amp;B</span>
<div style="left:1096px;top:645px;width:11px;height:30px;background:linear-gradient(#fafafa,#f0f0f0 60%,#e6e6e6);border-right:1px solid #b9b9b9;border-bottom:1px solid #b9b9b9"></div>
<div style="left:1107px;top:645px;width:100px;height:30px;border-right:1px solid #cfcfcf;border-bottom:1px solid #cfcfcf"></div>
<div style="left:1207px;top:645px;width:100px;height:30px;border-right:1px solid #cfcfcf;border-bottom:1px solid #cfcfcf"></div>
<span style="left:1098.20px;top:654px;font-size:12px;line-height:14px;color:#000;transform:scaleX(0.7800);transform-origin:0 0;">4</span>
<span style="left:1110.40px;top:653px;font-size:12px;line-height:14px;color:#000;transform:scaleX(1.0497);transform-origin:0 0;">Attraction</span>
<span style="left:1210.40px;top:653px;font-size:12px;line-height:14px;color:#000;transform:scaleX(1.0316);transform-origin:0 0;">Tourist Attraction</span>
<div style="left:1096px;top:675px;width:11px;height:30px;background:linear-gradient(#fafafa,#f0f0f0 60%,#e6e6e6);border-right:1px solid #b9b9b9;border-bottom:1px solid #b9b9b9"></div>
<div style="left:1107px;top:675px;width:100px;height:30px;border-right:1px solid #cfcfcf;border-bottom:1px solid #cfcfcf"></div>
<div style="left:1207px;top:675px;width:100px;height:30px;border-right:1px solid #cfcfcf;border-bottom:1px solid #cfcfcf"></div>
<span style="left:1098.20px;top:684px;font-size:12px;line-height:14px;color:#000;transform:scaleX(0.7800);transform-origin:0 0;">5</span>
<span style="left:1110.40px;top:683px;font-size:12px;line-height:14px;color:#000;transform:scaleX(0.9905);transform-origin:0 0;">Nature</span>
<span style="left:1210.40px;top:683px;font-size:12px;line-height:14px;color:#000;transform:scaleX(0.9698);transform-origin:0 0;">Nature Spot</span>
<div style="left:1096px;top:705px;width:11px;height:21px;background:linear-gradient(#fafafa,#f0f0f0 60%,#e6e6e6);border-right:1px solid #b9b9b9"></div>
<div style="left:1107px;top:705px;width:100px;height:21px;border-right:1px solid #cfcfcf"></div>
<div style="left:1207px;top:705px;width:100px;height:21px;border-right:1px solid #cfcfcf"></div>
<span style="left:1098.20px;top:714px;font-size:12px;line-height:14px;color:#000;transform:scaleX(0.7800);transform-origin:0 0;clip-path:inset(0 0 4px 0)">6</span>
<span style="left:1110.40px;top:713px;font-size:12px;line-height:14px;color:#000;transform:scaleX(0.9912);transform-origin:0 0;clip-path:inset(0 0 3px 0)">Other</span>
<span style="left:1210.40px;top:713px;font-size:12px;line-height:14px;color:#000;transform:scaleX(0.9912);transform-origin:0 0;clip-path:inset(0 0 3px 0)">Other</span>
<div style="left:1750px;top:536px;width:14px;height:190px;background:linear-gradient(90deg,#ffffff,#fafafa 35%,#f0f0f0);border-left:1px solid #c2c2c2"></div>
<div style="left:1750px;top:536px;width:14px;height:14px;background:#fcfcfc;border-left:1px solid #c2c2c2;border-bottom:1px solid #cdcdcd"></div>
<div style="left:1751px;top:651px;width:13px;height:62px;background:#e5e5e5;border-top:1px solid #cdcdcd;border-bottom:1px solid #cdcdcd"></div>
<div style="left:1751px;top:713px;width:13px;height:13px;background:#fcfcfc"></div>
<svg style="left:1753px;top:539.8px" width="8" height="4.2" viewBox="0 0 10 5"><path d="M0 5 L10 5 L5 0 Z" fill="#444"/></svg>
<svg style="left:1753px;top:717.4px" width="8" height="4.2" viewBox="0 0 10 5"><path d="M0 0 L10 0 L5 5 Z" fill="#444"/></svg>
<div style="left:1095px;top:735px;width:80px;height:16px;border:1px solid #b2b2b2;border-radius:3px;background:linear-gradient(#fefefe,#f3f3f3 55%,#ebebeb)"></div>
<span style="left:1107.00px;top:739px;font-size:8px;line-height:9px;color:#262626;transform:scaleX(0.8529);transform-origin:0 0;">Add &quot;NULL&quot; value</span>
<div style="left:1181px;top:735px;width:80px;height:16px;border:1px solid #b2b2b2;border-radius:3px;background:linear-gradient(#fefefe,#f3f3f3 55%,#ebebeb)"></div>
<span style="left:1194.00px;top:739px;font-size:8px;line-height:9px;color:#262626;transform:scaleX(0.8573);transform-origin:0 0;">Remove Selected</span>
<svg style="left:1076.6px;top:786px" width="10.6" height="7" viewBox="0 0 11 7.5"><path d="M0 0 L11 0 L5.5 7.5 Z" fill="#363636"/></svg>
<span style="left:1095.00px;top:784px;font-size:8px;line-height:9px;font-weight:700;color:#000;transform:scaleX(0.8778);transform-origin:0 0;">Constraints</span>
<div style="left:1075px;top:798px;width:711px;height:132px;background:#ececec;border:1px solid #dadada;border-radius:2px"></div>
<div style="left:1086px;top:803px;width:14px;height:14px;background:#fff;border:1px solid #b9b9b9;border-radius:1px"></div>
<span style="left:1105.00px;top:807px;font-size:8px;line-height:9px;color:#262626;transform:scaleX(0.9050);transform-origin:0 0;">Not null</span>
<div style="left:1163px;top:803px;width:14px;height:14px;background:#ececec;border:1px solid #b9b9b9;border-radius:1px"></div>
<span style="left:1182.00px;top:807px;font-size:8px;line-height:9px;color:#8e8e8e;transform:scaleX(0.8952);transform-origin:0 0;">Enforce not null constraint</span>
<div style="left:1086px;top:824px;width:14px;height:14px;background:#fff;border:1px solid #b9b9b9;border-radius:1px"></div>
<span style="left:1105.00px;top:828px;font-size:8px;line-height:9px;color:#262626;transform:scaleX(0.8783);transform-origin:0 0;">Unique</span>
<div style="left:1163px;top:824px;width:14px;height:14px;background:#ececec;border:1px solid #b9b9b9;border-radius:1px"></div>
<span style="left:1182.00px;top:828px;font-size:8px;line-height:9px;color:#8e8e8e;transform:scaleX(0.8907);transform-origin:0 0;">Enforce unique constraint</span>
<span style="left:1086.00px;top:853px;font-size:8px;line-height:9px;color:#262626;transform:scaleX(0.8690);transform-origin:0 0;">Expression</span>
<div style="left:1163px;top:845px;width:581px;height:24px;background:#fff;border:1px solid #b0b0b0;border-radius:3px;border-bottom-color:#a2a2a2"></div>
<div style="left:1723px;top:846px;width:20px;height:22px;border-left:1px solid #bdbdbd;background:linear-gradient(#fdfdfd,#ededed);border-radius:0 2px 2px 0"></div>
<svg style="left:1728.7px;top:855px" width="7.7" height="4" viewBox="0 0 10 5"><path d="M0 0 L10 0 L5 5 Z" fill="#444"/></svg>
<div style="left:1750px;top:845px;width:24px;height:24px;border:1px solid #b2b2b2;border-radius:3px;background:linear-gradient(#fefefe,#f3f3f3 55%,#ebebeb)"></div>
<span style="left:1756.60px;top:841px;font-size:24px;line-height:26px;font-family:'Liberation Serif',serif;color:#5b2c6f;transform:scaleX(0.9000);transform-origin:0 0;">ε</span>
<span style="left:1086.00px;top:882px;font-size:8px;line-height:9px;color:#262626;transform:scaleX(0.8871);transform-origin:0 0;">Expression description</span>
<div style="left:1163px;top:875px;width:611px;height:22px;background:#fff;border:1px solid #b0b0b0;border-radius:3px;border-bottom-color:#a2a2a2"></div>
<div style="left:1086px;top:903px;width:14px;height:14px;background:#fff;border:1px solid #b9b9b9;border-radius:1px"></div>
<span style="left:1105.00px;top:907px;font-size:8px;line-height:9px;color:#262626;transform:scaleX(0.8784);transform-origin:0 0;">Enforce expression constraint</span>
<svg style="left:1076.6px;top:942px" width="10.6" height="7" viewBox="0 0 11 7.5"><path d="M0 0 L11 0 L5.5 7.5 Z" fill="#363636"/></svg>
<span style="left:1095.00px;top:940px;font-size:8px;line-height:9px;font-weight:700;color:#000;transform:scaleX(0.8953);transform-origin:0 0;">Defaults</span>
<div style="left:1075px;top:954px;width:711px;height:47px;background:#ececec;border:1px solid #dadada;border-radius:2px;border-bottom:none;border-radius:2px 2px 0 0"></div>
<span style="left:1086.00px;top:967px;font-size:8px;line-height:9px;color:#262626;transform:scaleX(0.8837);transform-origin:0 0;">Default value</span>
<div style="left:1134px;top:959px;width:610px;height:23px;background:#fff;border:1px solid #b0b0b0;border-radius:3px;border-bottom-color:#a2a2a2"></div>
<div style="left:1750px;top:959px;width:24px;height:23px;border:1px solid #b2b2b2;border-radius:3px;background:linear-gradient(#fefefe,#f3f3f3 55%,#ebebeb)"></div>
<span style="left:1756.60px;top:955px;font-size:24px;line-height:26px;font-family:'Liberation Serif',serif;color:#5b2c6f;transform:scaleX(0.9000);transform-origin:0 0;">ε</span>
<span style="left:1086.00px;top:988px;font-size:8px;line-height:9px;color:#262626;transform:scaleX(0.8805);transform-origin:0 0;">Preview</span>

<div style="left:136px;top:1045px;width:1685px;height:1px;background:#f6f6f6"></div>
<div style="left:0px;top:1045px;width:136px;height:1px;background:#5c5c5c"></div>
<div style="left:0px;top:1046px;width:1821px;height:1px;background:#6f7d6c"></div>
<div style="left:1820px;top:8px;width:1px;height:1039px;background:#7e9375"></div>
<svg style="left:1811px;top:0" width="10" height="10" viewBox="0 0 10 10"><path d="M0 0 H10 V10 H9.5 V8.5 A8 8 0 0 0 1.5 0.5 L0 0.5 Z" fill="#c8ccc8"/><path d="M0 0.5 H1.5 A8 8 0 0 1 9.5 8.5 V10" fill="none" stroke="#8b908b" stroke-width="1"/></svg><svg style="left:1811px;top:1037px" width="10" height="10" viewBox="0 0 10 10"><path d="M10 0 V10 H0 V9.2 H2 A7.4 7.4 0 0 0 9.4 1.8 V0 Z" fill="#6b776b"/></svg>
</body></html>
